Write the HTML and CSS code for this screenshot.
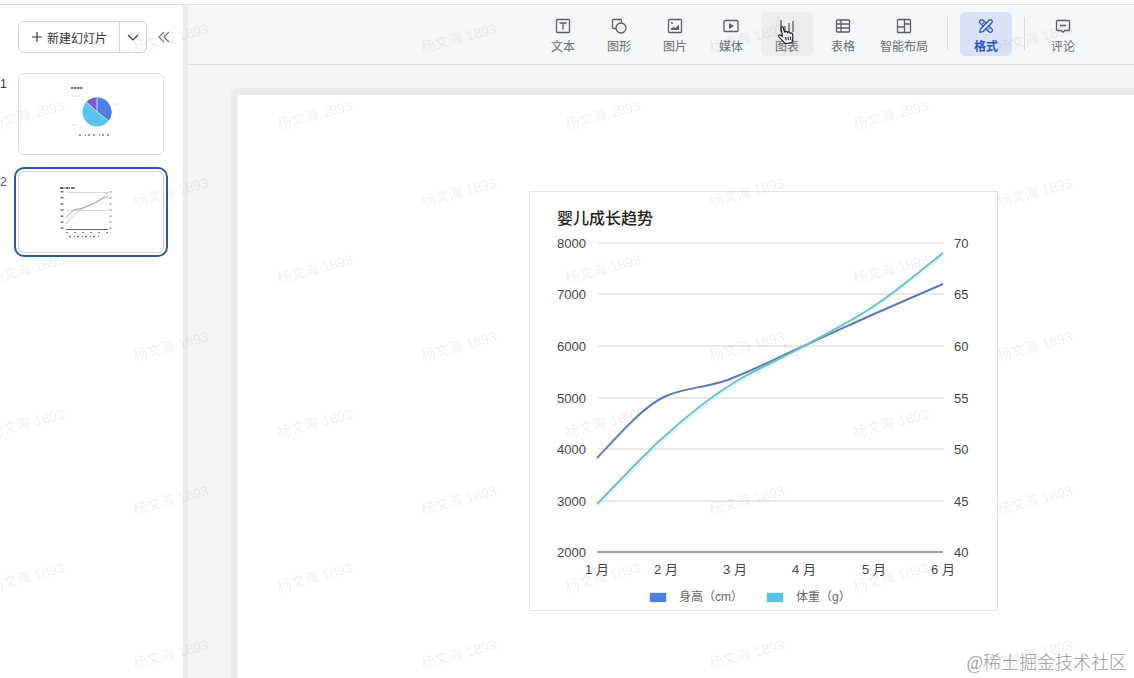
FILE: index.html
```html
<!DOCTYPE html>
<html lang="zh-CN">
<head>
  <meta charset="UTF-8">
  <meta name="viewport" content="width=device-width, initial-scale=1.0">
  <title>婴儿成长趋势</title>
  <link rel="stylesheet" href="styles.css">
</head>
<body>
  <div class="app">
    <aside class="sidebar">
      <div class="sidebar-head">
        <div class="new-slide">
          <button class="new-btn" type="button">
            <svg width="12" height="12" viewBox="0 0 12 12"><path d="M6 1v10M1 6h10"/></svg>
            新建幻灯片
          </button>
          <button class="more-btn" type="button" aria-label="更多">
            <svg width="12" height="12" viewBox="0 0 12 12"><path d="M1 4l5 5 5-5"/></svg>
          </button>
        </div>
        <button class="collapse-btn" type="button" aria-label="收起">
          <svg width="12" height="12" viewBox="0 0 12 12"><path d="M6 1L1 6l5 5M11 1L6 6l5 5"/></svg>
        </button>
      </div>
      <ol class="slides">
        <li class="slide-item">
          <span class="slide-no">1</span>
          <a class="thumb" href="#slide1" aria-label="幻灯片 1">
            <svg viewBox="0 0 144 80">
              <circle cx="78" cy="38" r="14.5" fill="#56c4ec"/>
              <path d="M78 38V23.500A14.500 14.500 0 0 1 89.500 46.800Z" fill="#4f7ee6"/>
              <path d="M78 38L67.500 28A14.500 14.500 0 0 1 78 23.500Z" fill="#7a5bd0"/>
              <path d="M78 23.500V38L89.500 46.800M78 38L67.500 28" fill="none" stroke="#e6f2ff" stroke-width=".8"/>
              <path d="M52 14h12" stroke="#444" stroke-width="1.500" stroke-dasharray="2 .5 3 .5"/>
              <path d="M53 22h8M95 30h6M54 51h4" stroke="#ccc" stroke-dasharray="2 1"/>
              <path d="M60 61h32" stroke="#777" stroke-width="1.500" stroke-dasharray="2 4 1 2 2 3"/>
            </svg>
          </a>
        </li>
        <li class="slide-item active">
          <span class="slide-no">2</span>
          <a class="thumb" href="#slide2" aria-label="幻灯片 2">
            <svg viewBox="0 0 144 80">
              <path d="M41 16h15" stroke="#333" stroke-width="1.500" stroke-dasharray="3 .5 1 1"/>
              <path d="M48 20.500h41M48 38.500h41" stroke="#ccc" stroke-width=".8"/>
              <path d="M47 57.500h42" stroke="#666"/>
              <path d="M43 19v39" stroke="#777" stroke-width="3" stroke-dasharray="1.500 4.600"/>
              <path d="M91.500 19v39" stroke="#999" stroke-width="2" stroke-dasharray="1.500 4.600"/>
              <path d="M47 46C52 40 54 37 60 37C68 35 79 29 89 24" fill="none" stroke="#777" stroke-width=".7"/>
              <path d="M47 52C57 40 62 37 70 34C78 30 83 27 89 20" fill="none" stroke="#aaa" stroke-width=".7"/>
              <path d="M47 60.500h44" stroke="#777" stroke-dasharray="2 6"/>
              <path d="M50 64.500h30" stroke="#777" stroke-width="1.500" stroke-dasharray="2 3 1 2"/>
            </svg>
          </a>
        </li>
      </ol>
    </aside>

    <main class="main">
      <nav class="toolbar">
        <button class="tool" type="button">
          <svg width="16" height="16" viewBox="0 0 16 16"><rect x="1.500" y="1.500" width="13" height="13" rx="1"/><path d="M4.500 5h7M8 5v6.500"/></svg>
          文本
        </button>
        <button class="tool" type="button">
          <svg width="16" height="16" viewBox="0 0 16 16"><path d="M5 10.500H2.500a1 1 0 0 1-1-1v-7a1 1 0 0 1 1-1h7a1 1 0 0 1 1 1V4.500"/><circle cx="10" cy="10" r="5"/></svg>
          图形
        </button>
        <button class="tool" type="button">
          <svg width="16" height="16" viewBox="0 0 16 16"><rect x="1.500" y="1.500" width="13" height="13" rx="1"/><path class="solid" d="M4 12V10.500L6.500 9l2 1L12 6.500V12z"/><circle class="solid" cx="5" cy="5" r="1"/></svg>
          图片
        </button>
        <button class="tool" type="button">
          <svg width="16" height="16" viewBox="0 0 16 16"><rect x="1" y="2.500" width="14" height="11" rx="1"/><path class="solid" d="M6 5l5 3-5 3z"/></svg>
          媒体
        </button>
        <button class="tool hover" type="button">
          <svg width="16" height="16" viewBox="0 0 16 16"><path d="M2 2v12M6 8v6M10 5v9M14 3v11"/></svg>
          图表
          <svg class="cursor" width="18" height="20" viewBox="0 0 18 20"><path d="M5.500 11.500L4 3.200C3.700 1.400 5.800 1 6.300 2.700L7.700 7.500C8 6 10 6 10.500 7.600C11.200 6.500 13 6.800 13.200 8.300C14.200 7.600 15.500 8.200 15.700 9.500C16.200 12 16 14 15 17.500L8 18.500C6.500 16.500 4 14 1.800 11.800C1 10.500 2.500 9.500 3.700 10.300Z"/><path d="M8.500 12l.6 3.500M11 11.700l.4 3.500M13.400 11.500l.2 3.500"/></svg>
        </button>
        <button class="tool" type="button">
          <svg width="16" height="16" viewBox="0 0 16 16"><rect x="1.500" y="2" width="13" height="12" rx="1"/><path d="M1.500 6h13M1.500 10h13M6 2v12"/></svg>
          表格
        </button>
        <button class="tool wide" type="button">
          <svg width="16" height="16" viewBox="0 0 16 16"><rect x="1.500" y="1.500" width="13" height="13" rx="1"/><path d="M8.500 1.500v13M1.500 9h7M8.500 6h6"/></svg>
          智能布局
        </button>
        <span class="divider"></span>
        <button class="tool selected" type="button">
          <svg width="16" height="16" viewBox="0 0 16 16">
            <path d="M5.800 8.700L2.200 5.100a2 2 0 0 1 2.900-2.900L8.700 5.800M10.200 7.300l3.600 3.600a2 2 0 0 1-2.900 2.900L7.300 10.200"/>
            <path d="M1.800 14.200L2.400 11 11 2.300a1.900 1.900 0 0 1 2.700 2.700L5 13.600z"/>
            <path d="M4.600 5.800l1.200-1.200M10.200 11.400l1.200-1.200"/>
          </svg>
          格式
        </button>
        <span class="divider"></span>
        <button class="tool" type="button">
          <svg width="16" height="16" viewBox="0 0 16 16"><path d="M2.500 2.500h11a1 1 0 0 1 1 1v8a1 1 0 0 1-1 1H10L8 14.200 6 12.500H2.500a1 1 0 0 1-1-1v-8a1 1 0 0 1 1-1zM5 7.500h6"/></svg>
          评论
        </button>
      </nav>

      <div class="stage">
        <section class="slide" id="slide2">
          <figure class="chart">
            <figcaption class="chart-title">婴儿成长趋势</figcaption>
            <svg class="plot" viewBox="0 0 467 349" role="img" aria-label="婴儿成长趋势">
              <path class="grid" d="M68 12h346M68 63h346M68 115h346M68 167h346M68 218h346M68 270h346"/>
              <path class="axis" d="M67 321h346"/>
              <path class="glow" d="M68 275C91 252 113 227 137 206C160 185 183 167 206 153C229 139 252 130 275 117C298 104 321 92 345 76C368 61 391 42 413 24"/>
              <path class="line height" d="M67 227C90 203 112 176 136 165C159 155 182 157 205 146C228 137 251 125 274 115C297 104 320 94 344 83L413 53"/>
              <path class="line weight" d="M67 273C90 250 112 225 136 204C159 183 182 165 205 151C228 137 251 128 274 115C297 102 320 91 344 75C367 60 390 40 413 22"/>
              <g class="y-left">
                <text x="56" y="17">8000</text>
                <text x="56" y="68">7000</text>
                <text x="56" y="120">6000</text>
                <text x="56" y="172">5000</text>
                <text x="56" y="223">4000</text>
                <text x="56" y="275">3000</text>
                <text x="56" y="326">2000</text>
              </g>
              <g class="y-right">
                <text x="424" y="17">70</text>
                <text x="424" y="68">65</text>
                <text x="424" y="120">60</text>
                <text x="424" y="172">55</text>
                <text x="424" y="223">50</text>
                <text x="424" y="275">45</text>
                <text x="424" y="326">40</text>
              </g>
              <g class="x-axis">
                <text x="67" y="343">1 月</text>
                <text x="136" y="343">2 月</text>
                <text x="205" y="343">3 月</text>
                <text x="274" y="343">4 月</text>
                <text x="344" y="343">5 月</text>
                <text x="413" y="343">6 月</text>
              </g>
            </svg>
            <ul class="legend">
              <li><i class="swatch height"></i>身高（cm）</li>
              <li><i class="swatch weight"></i>体重（g）</li>
            </ul>
          </figure>
        </section>
      </div>
    </main>

    <svg class="watermark" aria-hidden="true">
      <defs>
        <pattern id="mark" x="-45" y="0" width="288" height="154" patternUnits="userSpaceOnUse">
          <text x="72" y="120" transform="rotate(-15 72 115)">杨文海 1893</text>
          <text x="216" y="43" transform="rotate(-15 216 38)">杨文海 1893</text>
        </pattern>
      </defs>
      <rect width="100%" height="100%" fill="url(#mark)"/>
    </svg>
    <span class="credit">@稀土掘金技术社区</span>
  </div>
</body>
</html>
```

FILE: styles.css
```css
* {
  box-sizing: border-box;
}
body {
  margin: 0;
  font-family: "Liberation Sans", "Noto Sans CJK SC", sans-serif;
  font-size: 12px;
  color: #333;
  background: #fff;
}
button {
  margin: 0;
  padding: 0;
  border: none;
  background: none;
  font: inherit;
  color: inherit;
  cursor: pointer;
}
svg {
  display: block;
  fill: none;
}
ol, ul {
  margin: 0;
  padding: 0;
  list-style: none;
}
.app {
  position: relative;
  display: flex;
  height: 100vh;
  padding-top: 4px;
  overflow: hidden;
}

/* sidebar */
.sidebar {
  z-index: 1;
  flex: none;
  width: 183px;
  padding-top: 16px;
  background: #fff;
  border-top: 1px solid #dcdee0;
  box-shadow: 5px 0 0 #eaeaea;
}
.sidebar-head {
  display: flex;
  align-items: center;
  gap: 11px;
  padding-left: 18px;
}
.sidebar-head svg {
  stroke: #333;
  stroke-width: 1.2;
}
.sidebar-head .collapse-btn svg {
  stroke: #777;
}
.new-slide {
  display: flex;
  width: 129px;
  height: 32px;
  border: 1px solid #d0d3d8;
  border-radius: 6px;
}
.new-btn {
  display: flex;
  flex: 1;
  align-items: center;
  justify-content: center;
  gap: 4px;
}
.more-btn {
  display: flex;
  align-items: center;
  justify-content: center;
  width: 27px;
  border-left: 1px solid #d0d3d8;
}
.slides {
  display: flex;
  flex-direction: column;
  gap: 16px;
  padding-top: 20px;
}
.slide-item {
  display: flex;
}
.slide-no {
  width: 18px;
  padding-top: 3px;
  line-height: 16px;
}
.thumb {
  width: 146px;
  height: 82px;
  border: 1px solid #dcdde2;
  border-radius: 6px;
}
.active .slide-no {
  color: #3f5a96;
}
.active .thumb {
  border-color: #c4d9f2;
  outline: 2px solid #3058a4;
  outline-offset: 2px;
}

/* toolbar */
.main {
  display: flex;
  flex: 1;
  flex-direction: column;
  min-width: 0;
  background: #f4f4f4;
}
.toolbar {
  display: flex;
  flex: none;
  align-items: center;
  justify-content: flex-end;
  gap: 4px;
  height: 61px;
  padding: 0 45px 2px 0;
  background: #f5f6f7;
  border-top: 1px solid #dcdee0;
  border-bottom: 1px solid #dcdee0;
}
.tool {
  position: relative;
  display: flex;
  flex-direction: column;
  align-items: center;
  gap: 4px;
  width: 52px;
  height: 44px;
  padding-top: 6px;
  border-radius: 5px;
  line-height: 18px;
  color: #6b6d70;
}
.tool svg {
  stroke: #5c5e62;
  stroke-width: 1.3;
}
.tool .solid {
  fill: #5c5e62;
  stroke: none;
}
.tool.wide {
  width: 62px;
}
.tool.hover {
  background: #ebecec;
}
.tool.selected {
  background: #d9e2f7;
  color: #2a55c0;
  font-weight: bold;
}
.tool.selected svg {
  stroke: #2a55c0;
}
.divider {
  width: 1px;
  height: 33px;
  margin: 0 8px;
  background: #d6d8da;
}
.tool .cursor {
  position: absolute;
  top: 13px;
  left: 16px;
  fill: #fff;
  stroke: #222;
  stroke-width: 1.2;
}

/* slide */
.stage {
  flex: 1;
  min-height: 0;
  padding: 30px 0 0 55px;
  overflow: hidden;
}
.slide {
  height: 100%;
  padding: 96px 136px 0 291px;
  background: #fff;
  border-top-left-radius: 2px;
  box-shadow: 0 0 0 7px #eaeaea;
}
.chart {
  margin: 0;
  background: #fff;
  border: 1px solid #e2e2e2;
}
.chart-title {
  padding: 15px 27px 0;
  font-size: 16px;
  font-weight: 500;
  line-height: 24px;
  color: #222;
}
.plot {
  width: 100%;
  font-size: 13px;
}
.plot text {
  fill: #444;
}
.grid {
  stroke: #e8e8e8;
  stroke-width: 2;
}
.axis {
  stroke: #9c9c9e;
  stroke-width: 2;
}
.line {
  stroke-width: 2;
}
.line.height {
  stroke: #5f7bb4;
}
.line.weight {
  stroke: #72bfc2;
}
.glow {
  stroke: #c8f8fa;
  stroke-width: 3;
  opacity: 0.6;
}
.y-left {
  text-anchor: end;
}
.x-axis {
  text-anchor: middle;
}
.legend {
  display: flex;
  gap: 24px;
  padding: 9px 0 5px 120px;
  line-height: 16px;
  color: #666;
}
.legend li {
  display: flex;
  align-items: center;
  gap: 13px;
}
.swatch {
  width: 16px;
  height: 9px;
}
.swatch.height {
  background: #4f7fe3;
  box-shadow: 0 0 0 1px #e4edfc;
}
.swatch.weight {
  background: #55c3e6;
  box-shadow: 0 0 0 1px #def7fb;
}

/* overlays */
.watermark {
  position: absolute;
  inset: 0;
  z-index: 2;
  width: 100%;
  height: 100%;
  pointer-events: none;
}
.watermark text {
  font-size: 14px;
  text-anchor: middle;
  fill: #000;
  fill-opacity: 0.06;
}
.credit {
  position: absolute;
  right: 7px;
  bottom: 3px;
  z-index: 2;
  font-family: "Liberation Serif", "Noto Sans CJK SC", serif;
  font-size: 18px;
  font-weight: 300;
  line-height: 24px;
  color: #999;
}
```
